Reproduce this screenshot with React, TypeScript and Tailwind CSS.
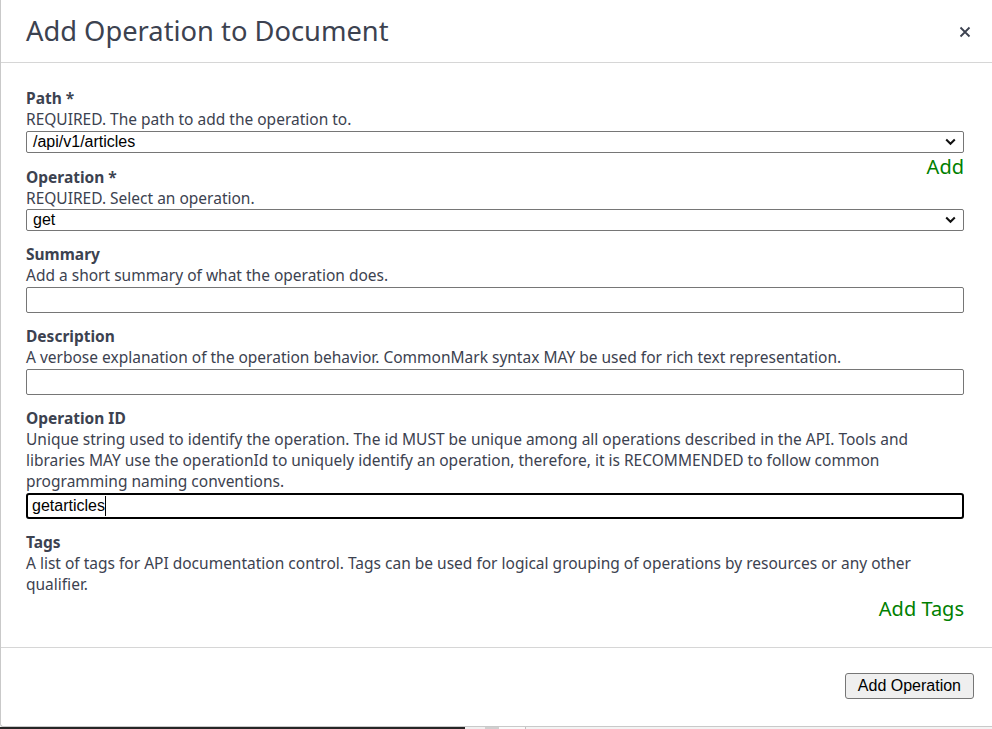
import React from 'react';

const Chevron = () => (
    <svg width="11" height="8" viewBox="0 0 11 8" className="shrink-0">
        <path d="M1.2 1.5 L5.5 5.8 L9.8 1.5" fill="none" stroke="#111" strokeWidth="2" />
    </svg>
);

/* fake select box */
const SelectBox: React.FC<{ value: string }> = ({ value }) => (
    <div className="flex items-center justify-between h-[22px] border border-[#767676] rounded-[2px] pl-[6px] pr-[7px] font-['Liberation_Sans',Arial,sans-serif] text-[16px] text-black">
        <span className="leading-none">{value}</span>
        <Chevron />
    </div>
);

const TextBox: React.FC<{ value?: string; focused?: boolean }> = ({ value, focused }) => (
    <div
        className={
            focused
                ? 'flex items-center h-[26px] border-2 border-black rounded-[3px] pl-[4px] font-[\'Liberation_Sans\',Arial,sans-serif] text-[16px] text-black'
                : 'flex items-center h-[26px] border border-[#767676] rounded-[2px] pl-[5px] font-[\'Liberation_Sans\',Arial,sans-serif] text-[16px] text-black'
        }
    >
        {value && <span className="leading-none">{value}</span>}
        {focused && <span className="w-px h-[20px] bg-black" />}
    </div>
);

const Field: React.FC<{ label: string; help: React.ReactNode; children?: React.ReactNode }> = ({ label, help, children }) => (
    <div className="mb-[13px]">
        <div className="font-bold leading-[21px]">{label}</div>
        <div className="leading-[21px]">{help}</div>
        {children}
    </div>
);

export default function App() {
    return (
        <div className="w-[992px] h-[729px] overflow-hidden bg-white flex flex-col">
            {/* modal */}
            <div className="h-[727px] flex flex-col border-l border-b border-[#c9c9c9] rounded-bl-[3px] text-[#3c4250] font-['Noto_Sans','Open_Sans',sans-serif] text-[15.5px]">
                {/* header */}
                <div className="h-[63px] shrink-0 flex items-center justify-between border-b border-[#d6d6d6] pl-[25px] pr-[21px]">
                    <h1 className="text-[27.3px] leading-none pb-[1px]">Add Operation to Document</h1>
                    <svg width="12" height="12" viewBox="0 0 12 12" className="mb-[-2px]">
                        <path d="M1.5 1.5 L10.5 10.5 M10.5 1.5 L1.5 10.5" stroke="#3c4250" strokeWidth="1.8" />
                    </svg>
                </div>

                {/* body */}
                <div className="flex-1 pt-[25px] pl-[25px] pr-[28px]">
                    <div className="mb-[14px]">
                        <div className="font-bold leading-[21px]">Path *</div>
                        <div className="leading-[21px] mb-px">REQUIRED. The path to add the operation to.</div>
                        <SelectBox value="/api/v1/articles" />
                        <div className="float-right text-[20px] leading-[28px] text-[#008000]">Add</div>
                    </div>
                    <Field label="Operation *" help="REQUIRED. Select an operation.">
                        <SelectBox value="get" />
                    </Field>
                    <Field label="Summary" help="Add a short summary of what the operation does.">
                        <div className="mt-px"><TextBox /></div>
                    </Field>
                    <Field label="Description" help="A verbose explanation of the operation behavior. CommonMark syntax MAY be used for rich text representation.">
                        <div className="mt-px"><TextBox /></div>
                    </Field>
                    <Field
                        label="Operation ID"
                        help="Unique string used to identify the operation. The id MUST be unique among all operations described in the API. Tools and libraries MAY use the operationId to uniquely identify an operation, therefore, it is RECOMMENDED to follow common programming naming conventions."
                    >
                        <div className="mt-px"><TextBox value="getarticles" focused /></div>
                    </Field>
                    <div>
                        <div className="font-bold leading-[21px]">Tags</div>
                        <div className="leading-[21px]">
                            A list of tags for API documentation control. Tags can be used for logical grouping of operations by resources or any other qualifier.
                        </div>
                        <div className="flex justify-end text-[20px] leading-[28px] text-[#008000]">Add Tags</div>
                    </div>
                </div>

                {/* footer */}
                <div className="h-[79px] shrink-0 border-t border-[#d6d6d6] flex items-start justify-end pt-[25px] pr-[18px]">
                    <button className="h-[26px] px-[12px] bg-[#efefef] border border-[#767676] rounded-[3px] font-['Liberation_Sans',Arial,sans-serif] text-[16px] text-black leading-none">
                        Add Operation
                    </button>
                </div>
            </div>

            {/* page behind the modal */}
            <div className="h-[2px] flex">
                <div className="w-[465px] bg-[#262626]" />
                <div className="w-[20px] bg-[#f0f0f0]" />
                <div className="w-[14px] bg-[#cfcfcf]" />
                <div className="w-[26px] bg-[#fafafa]" />
                <div className="w-px bg-[#c0c0c0]" />
                <div className="flex-1 bg-[#f3f3f3]" />
            </div>
        </div>
    );
}
